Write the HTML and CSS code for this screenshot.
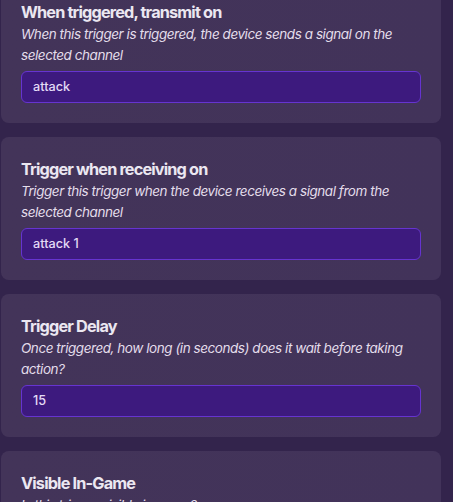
FILE: index.html
```html
<!DOCTYPE html>
<html>
<head>
<meta charset="utf-8">
<link rel="stylesheet" href="styles.css">
</head>
<body>
<div class="list">
  <div class="card">
    <div class="title">When triggered, transmit on</div>
    <div class="desc">When this trigger is triggered, the device sends a signal on the selected channel</div>
    <div class="input">attack</div>
  </div>
  <div class="card">
    <div class="title">Trigger when receiving on</div>
    <div class="desc">Trigger this trigger when the device receives a signal from the selected channel</div>
    <div class="input">attack 1</div>
  </div>
  <div class="card">
    <div class="title">Trigger Delay</div>
    <div class="desc">Once triggered, how long (in seconds) does it wait before taking action?</div>
    <div class="input">15</div>
  </div>
  <div class="card">
    <div class="title">Visible In-Game</div>
    <div class="desc">Is this trigger visible in game?</div>
    <div class="input">No</div>
  </div>
</div>
</body>
</html>
```
FILE: styles.css
```css
html, body {
  margin: 0;
  padding: 0;
  background: #33244c;
  height: 100%;
  overflow: hidden;
}
body {
  font-family: Inter, "Noto Sans", sans-serif;
}
.list {
  display: flex;
  flex-direction: column;
  gap: 14px;
  margin-top: -20px;
  padding-left: 1px;
  width: 440px;
}
.card {
  background: linear-gradient(90deg, #433459 0%, #42335a 100%);
  border-radius: 8px;
  padding: 21px 20px 20px 20px;
  display: flex;
  flex-direction: column;
}
.title {
  color: #ebe7f1;
  font-size: 16.3px;
  font-weight: 700;
  line-height: 23px;
  letter-spacing: -0.85px;
}
.desc {
  color: #e4ddeb;
  font-size: 13.5px;
  font-style: italic;
  line-height: 21px;
  letter-spacing: -0.45px;
  margin-bottom: 5px;
}
.input {
  box-sizing: border-box;
  height: 32px;
  background: #3d1a7e;
  border: 1px solid #6634d0;
  border-radius: 6px;
  color: #e4dbf6;
  font-size: 12.7px;
  font-weight: 500;
  line-height: 30px;
  padding: 0 11px;
}
```
